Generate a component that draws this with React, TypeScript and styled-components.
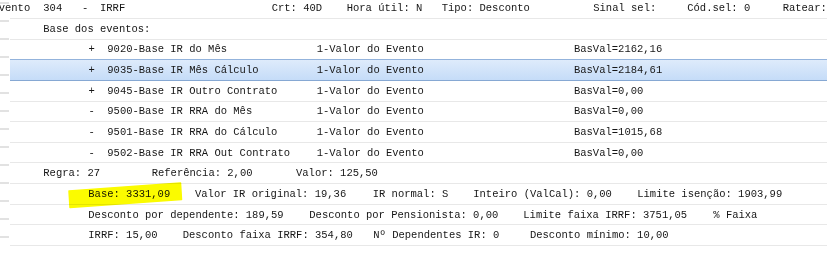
import * as React from "react";
import styled, { createGlobalStyle } from "styled-components";

type Col = [number, string];

const GUTTER = 10;

const header: Col[] = [
  [-7.6, "Evento"],
  [43.3, "304"],
  [82, "-"],
  [100, "IRRF"],
  [271.7, "Crt: 40D"],
  [346.7, "Hora útil: N"],
  [441.7, "Tipo: Desconto"],
  [593.3, "Sinal sel:"],
  [687.3, "Cód.sel: 0"],
  [782.7, "Ratear:"],
];

const eventos = [
  { sinal: "+", nome: "9020-Base IR do Mês", val: "2162,16" },
  { sinal: "+", nome: "9035-Base IR Mês Cálculo", val: "2184,61", sel: true },
  { sinal: "+", nome: "9045-Base IR Outro Contrato", val: "0,00" },
  { sinal: "-", nome: "9500-Base IR RRA do Mês", val: "0,00" },
  { sinal: "-", nome: "9501-Base IR RRA do Cálculo", val: "1015,68" },
  { sinal: "-", nome: "9502-Base IR RRA Out Contrato", val: "0,00" },
];

const detalhes: Col[][] = [
  [
    [43.3, "Regra: 27"],
    [151.7, "Referência: 2,00"],
    [296, "Valor: 125,50"],
  ],
  [
    [88.3, "Base: 3331,09"],
    [195, "Valor IR original: 19,36"],
    [372.7, "IR normal: S"],
    [473.3, "Inteiro (ValCal): 0,00"],
    [637.3, "Limite isenção: 1903,99"],
  ],
  [
    [88.3, "Desconto por dependente: 189,59"],
    [309.3, "Desconto por Pensionista: 0,00"],
    [523.3, "Limite faixa IRRF: 3751,05"],
    [713.3, "% Faixa"],
  ],
  [
    [88.3, "IRRF: 15,00"],
    [182.7, "Desconto faixa IRRF: 354,80"],
    [373.3, "Nº Dependentes IR: 0"],
    [530, "Desconto mínimo: 10,00"],
  ],
];

function Line({ cols, selected }: { cols: Col[]; selected?: boolean }) {
  return (
    <ScRow $selected={selected}>
      {cols.map(([x, text], i) => {
        const next = cols[i + 1];
        return (
          <ScSeg
            key={i}
            $lead={i === 0 ? x - GUTTER : 0}
            $w={next ? next[0] - x : undefined}
          >
            {text}
          </ScSeg>
        );
      })}
    </ScRow>
  );
}

export default function App() {
  return (
    <>
      <GlobalStyle />
      <ScPage>
        <ScList>
          <Line cols={header} />
          <Line cols={[[43.3, "Base dos eventos:"]]} />
          {eventos.map((ev) => (
            <Line
              key={ev.nome}
              selected={ev.sel}
              cols={[
                [88.4, ev.sinal],
                [107.3, ev.nome],
                [316.7, "1-Valor do Evento"],
                [574, `BasVal=${ev.val}`],
              ]}
            />
          ))}
          {detalhes.map((cols, i) => (
            <Line key={i} cols={cols} />
          ))}
          <ScRow />
        </ScList>
        {/* marca-texto amarelo por cima do "Base" */}
        <ScHighlight width="827" height="253" viewBox="0 0 827 253">
          <path
            d="M69 191 L180.5 183 L181.5 199.5 L70 207.5 Z"
            fill="#fbfb00"
            stroke="#fbfb00"
            strokeWidth="1.5"
            strokeLinejoin="round"
          />
        </ScHighlight>
      </ScPage>
    </>
  );
}

const GlobalStyle = createGlobalStyle`
  html, body {
    margin: 0;
    padding: 0;
    background: #fff;
    overflow: hidden;
  }
`;

const ScPage = styled.div`
  position: relative;
  width: 827px;
  height: 253px;
  overflow: hidden;
  background-color: #fff;
  background-image: linear-gradient(#c4c4c4 0 1px, transparent 1px);
  background-size: 9px 18px;
  background-position: 0 2.5px;
  background-repeat: repeat-y;
  font-family: "Liberation Mono", "DejaVu Sans Mono", monospace;
  font-size: 10.5px;
  color: #161616;
`;

const ScList = styled.div`
  display: flex;
  flex-direction: column;
  margin-top: -1.65px;
`;

const ScRow = styled.div<{ $selected?: boolean }>`
  display: flex;
  flex-flow: row nowrap;
  align-items: center;
  height: 19.65px;
  margin-left: ${GUTTER}px;
  border-bottom: 1px solid ${(p) => (p.$selected ? "#86a8d3" : "#e8e8e8")};
  background: ${(p) =>
    p.$selected ? "linear-gradient(#deebfb, #c5dcf8)" : "transparent"};
  box-shadow: ${(p) => (p.$selected ? "0 -1px 0 #93b3dc" : "none")};
  white-space: pre;
`;

const ScSeg = styled.span<{ $lead: number; $w?: number }>`
  flex: none;
  margin-left: ${(p) => p.$lead}px;
  width: ${(p) => (p.$w ? `${p.$w}px` : "auto")};
  overflow: visible;
  white-space: pre;
`;

const ScHighlight = styled.svg`
  position: absolute;
  left: 0;
  top: 0;
  pointer-events: none;
  mix-blend-mode: multiply;
`;
